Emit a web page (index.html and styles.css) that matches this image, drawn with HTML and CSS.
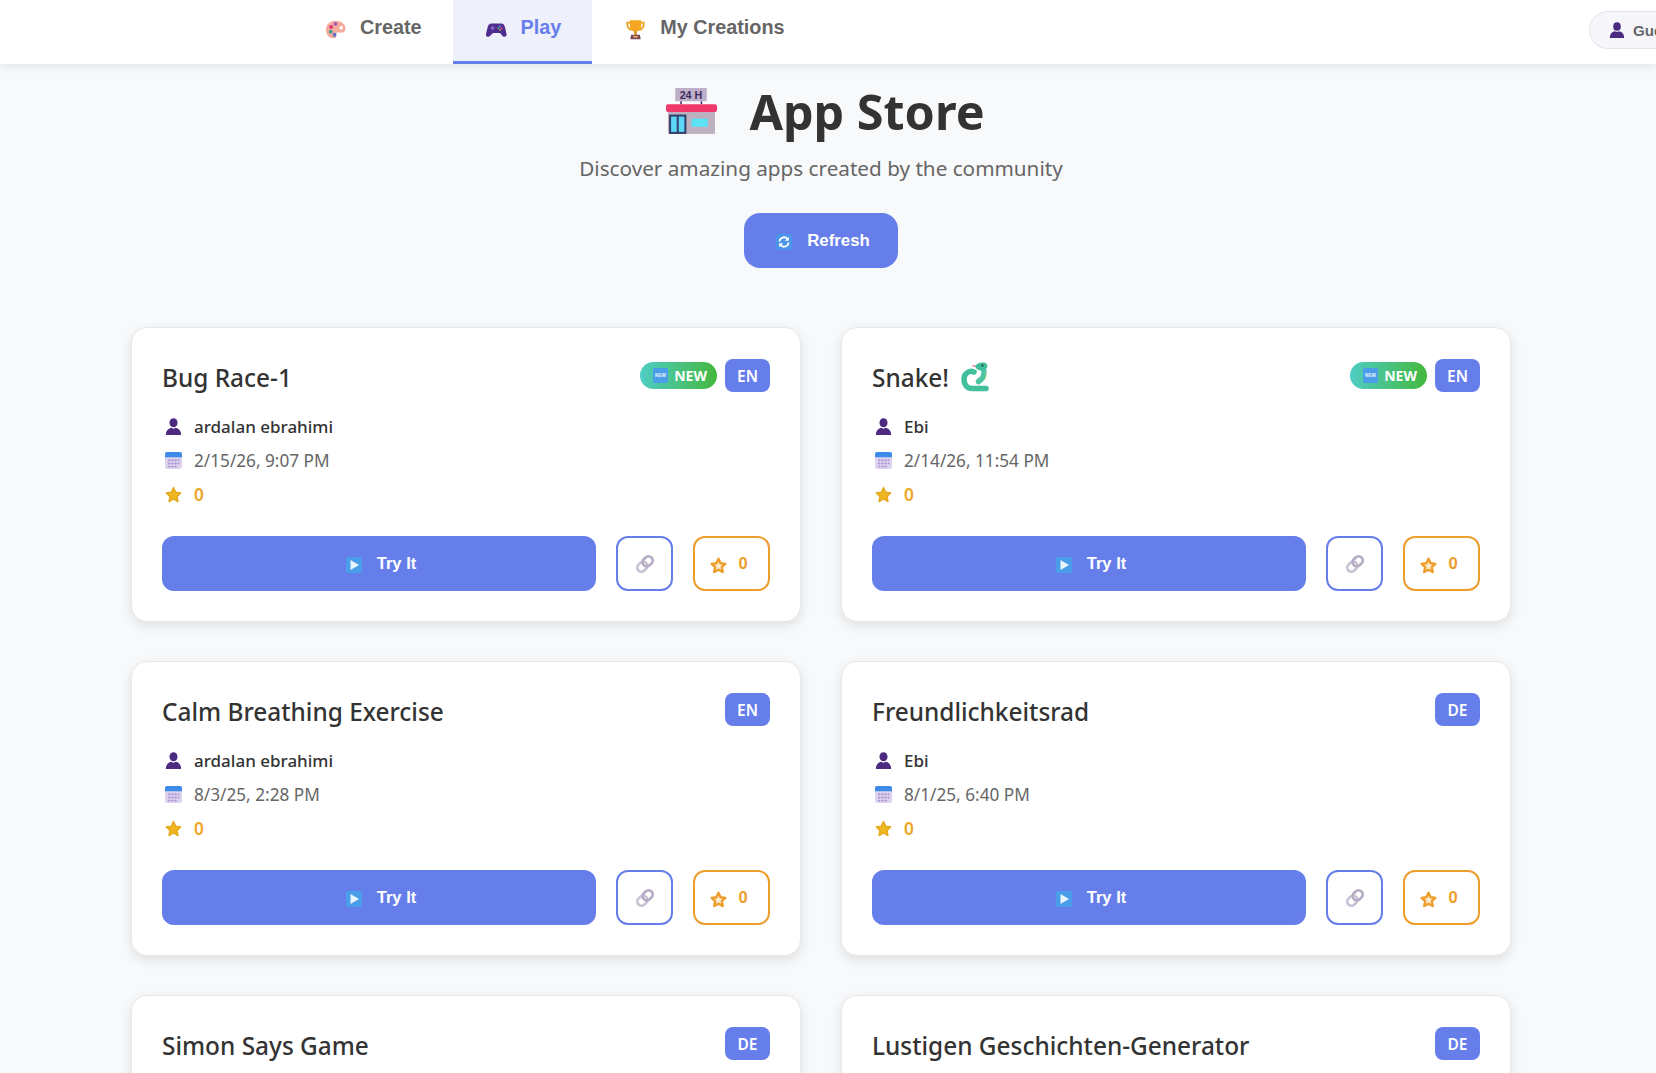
FILE: index.html
```html
<!DOCTYPE html>
<html lang="en">
  <head>
    <meta charset="UTF-8" />
    <meta name="viewport" content="width=device-width, initial-scale=1.0" />
    <title>App Store</title>
    <link rel="stylesheet" href="styles.css">
  </head>
  <body>
    <svg class="sprites" width="0" height="0">
      <symbol id="i-palette" viewBox="0 0 24 24">
        <path d="M12 2C5 2 1 7 1 12.500C1 18 5 22 10.500 22c2.500 0 2.500-2 2-3.500-.5-1.800.5-3 2.500-3h4c3 0 4.500-1.800 4.500-4.500C23.500 6 18.500 2 12 2z" fill="#f4ac9f"/>
        <circle cx="7" cy="9" r="2.200" fill="#d8356f"/>
        <circle cx="12" cy="5.500" r="2.200" fill="#a653b8"/>
        <circle cx="6.500" cy="14.500" r="2.200" fill="#3f9f90"/>
        <circle cx="11" cy="18" r="2.200" fill="#5f6fc8"/>
        <circle cx="18.500" cy="10" r="1.900" fill="#fff"/>
      </symbol>
      <symbol id="i-gamepad" viewBox="0 0 24 24">
        <path d="M6.500 5h11c2.500 0 3.500 1.500 4.200 4.500l1.800 8c.5 2.500-2.700 3.800-4.500 1.800L16 16H8l-3.500 3.300c-1.800 2-5 .7-4.500-1.800l1.800-8C2.500 6.500 4 5 6.500 5z" fill="#4f2d8f"/>
        <rect x="5" y="9.500" width="5" height="1.600" fill="#8e6cc9"/>
        <rect x="6.700" y="7.800" width="1.600" height="5" fill="#8e6cc9"/>
        <circle cx="16" cy="8.500" r="1" fill="#4fb8e8"/>
        <circle cx="18" cy="10.500" r="1" fill="#e84f8a"/>
        <circle cx="14" cy="10.500" r="1" fill="#58c26e"/>
        <circle cx="16" cy="12.500" r="1" fill="#e8b84f"/>
      </symbol>
      <symbol id="i-trophy" viewBox="0 0 24 24">
        <path d="M6 4H2.500c0 5 1.500 8 5 8.500M18 4h3.500c0 5-1.500 8-5 8.500" fill="none" stroke="#e8a020" stroke-width="2"/>
        <path d="M5.500 1.500h13V8c0 4-2.500 6.500-6.500 6.500S5.500 12 5.500 8z" fill="#f5a623"/>
        <rect x="10.500" y="14" width="3" height="4" fill="#d98a17"/>
        <path d="M7 18h10l1 5H6z" fill="#7d4a4f"/>
        <rect x="9.500" y="19.500" width="5" height="1.600" fill="#f0c070"/>
      </symbol>
      <symbol id="i-refresh" viewBox="0 0 16 16">
        <rect width="16" height="16" rx="1" fill="#4a94ea"/>
        <path d="M3.500 7.500A4.500 4.500 0 0 1 11.500 5M12.500 8.500A4.500 4.500 0 0 1 4.500 11" fill="none" stroke="#fff" stroke-width="1.800"/>
        <path d="M12.800 2.800v3.900H8.900zM3.200 13.200V9.300h3.900z" fill="#fff"/>
      </symbol>
      <symbol id="i-person" viewBox="0 0 16 16">
        <ellipse cx="8" cy="4.500" rx="3.800" ry="4.300" fill="#4b2a80"/>
        <path d="M.8 16c0-3.800 1.800-6 5-6.800L8 10l2.200-.8c3.200.8 5 3 5 6.800z" fill="#4b2a80"/>
      </symbol>
      <symbol id="i-calendar" viewBox="0 0 16 16">
        <rect x="0" y="0" width="16" height="16" rx="2" fill="#ddd3ee"/>
        <path d="M0 5V2a2 2 0 0 1 2-2h12a2 2 0 0 1 2 2v3z" fill="#3d8be8"/>
        <g fill="#a98fd0">
          <rect x="3" y="7" width="2" height="1.600"/><rect x="6" y="7" width="2" height="1.600"/><rect x="9" y="7" width="2" height="1.600"/><rect x="12" y="7" width="1.500" height="1.600"/>
          <rect x="3" y="10" width="2" height="1.600"/><rect x="6" y="10" width="2" height="1.600"/><rect x="9" y="10" width="2" height="1.600"/><rect x="12" y="10" width="1.500" height="1.600"/>
          <rect x="3" y="13" width="2" height="1.400"/><rect x="6" y="13" width="2" height="1.400"/><rect x="9" y="13" width="2" height="1.400"/>
        </g>
      </symbol>
      <symbol id="i-star" viewBox="0 0 24 24">
        <path d="M12 2l3 6.700 7.200 1-5.200 5 1.300 7.200L12 18.300l-6.300 3.600L7 14.700l-5.200-5 7.200-1z" fill="#efb622" stroke="#e3a91c" stroke-width="2" stroke-linejoin="round"/>
      </symbol>
      <symbol id="i-star-line" viewBox="0 0 24 24">
        <path d="M12 3.500l2.600 5.700 6.100.8-4.500 4.200 1.200 6.100L12 17.300l-5.400 3 1.200-6.100L3.300 10l6.100-.8z" fill="#fbe9cc" stroke="#ed9d2b" stroke-width="3" stroke-linejoin="round"/>
      </symbol>
      <symbol id="i-play" viewBox="0 0 16 16">
        <rect width="16" height="16" rx="1" fill="#4a9de8"/>
        <path d="M4.500 3l8.500 5-8.500 5z" fill="#e8f5fd"/>
      </symbol>
      <symbol id="i-link" viewBox="0 0 24 24">
        <g transform="rotate(-45 12 12)" fill="none" stroke-width="3.200">
          <rect x="1" y="7" width="13" height="10" rx="5" stroke="#c9c2d4"/>
          <rect x="10" y="7" width="13" height="10" rx="5" stroke="#b5abc4"/>
        </g>
      </symbol>
      <symbol id="i-snake" viewBox="0 0 28 30">
        <path d="M25 26.500H11C5.500 26.500 3 22 3 17c0-6 6-9 10-7" fill="none" stroke="#42bf9d" stroke-width="5.500" stroke-linecap="round"/>
        <path d="M21.500 5c2.500 5 2 11-4 14.500" fill="none" stroke="#4cc6a4" stroke-width="5.500" stroke-linecap="round"/>
        <path d="M14 4c2-3 6-4 9-3.500 3 .5 4 3 3 5-1 2-3 3-6 3-2 0-5-1-6-4.500z" fill="#3fbf9b"/>
        <circle cx="21.500" cy="3.500" r="1.100" fill="#234"/>
        <path d="M14.500 4.500l-3-1" stroke="#e84f6a" stroke-width="1.200"/>
        <path d="M25 11v1.500M24.500 15v1.500" stroke="#e6d64a" stroke-width="1.200"/>
      </symbol>
    </svg>

    <nav class="topbar">
      <a class="tab"><svg class="tab-icon"><use href="#i-palette"/></svg>Create</a>
      <a class="tab tab-active"><svg class="tab-icon"><use href="#i-gamepad"/></svg>Play</a>
      <a class="tab"><svg class="tab-icon"><use href="#i-trophy"/></svg>My Creations</a>
      <div class="user-pill"><svg class="user-icon"><use href="#i-person"/></svg>Guest</div>
    </nav>

    <main class="store">
      <header class="store-head">
        <h1 class="store-title">
          <svg class="store-icon" viewBox="0 0 50 46">
            <rect x="9" y="0" width="31" height="13" rx="1" fill="#bdb0c8"/>
            <text x="24.500" y="10.500" class="store-sign">24 H</text>
            <rect x="14" y="13" width="1.500" height="3" fill="#3d2a5e"/>
            <rect x="34" y="13" width="1.500" height="3" fill="#3d2a5e"/>
            <rect x="2" y="23" width="46" height="22" fill="#bdb0c0"/>
            <rect x="0" y="16" width="50" height="7.500" rx="2" fill="#f0386b"/>
            <rect x="3" y="26" width="17" height="19" fill="#33406e"/>
            <rect x="5" y="28" width="5.500" height="15" fill="#5cd6f5"/>
            <rect x="12.500" y="28" width="5.500" height="15" fill="#5cd6f5"/>
            <rect x="25" y="30" width="16" height="8" fill="#5ce1f5"/>
          </svg>
          App Store
        </h1>
        <p class="store-sub">Discover amazing apps created by the community</p>
        <button class="refresh"><svg class="btn-icon"><use href="#i-refresh"/></svg>Refresh</button>
      </header>

      <section class="grid">
        <article class="card">
          <div class="card-head">
            <h3 class="card-title">Bug Race-1</h3>
            <div class="badges"><span class="badge-new"><svg class="new-icon" viewBox="0 0 16 16"><rect width="16" height="16" rx="1" fill="#4a9de8"/><text x="8" y="10" class="new-sign">NEW</text></svg>NEW</span><span class="badge-lang">EN</span></div>
          </div>
          <div class="meta author"><svg class="meta-icon"><use href="#i-person"/></svg>ardalan ebrahimi</div>
          <div class="meta"><svg class="meta-icon"><use href="#i-calendar"/></svg>2/15/26, 9:07 PM</div>
          <div class="meta stars"><svg class="meta-icon"><use href="#i-star"/></svg>0</div>
          <div class="actions">
            <button class="try"><svg class="btn-icon"><use href="#i-play"/></svg>Try It</button>
            <button class="share"><svg class="share-icon"><use href="#i-link"/></svg></button>
            <button class="fav"><svg class="fav-icon"><use href="#i-star-line"/></svg>0</button>
          </div>
        </article>

        <article class="card">
          <div class="card-head">
            <h3 class="card-title">Snake! <svg class="snake-icon"><use href="#i-snake"/></svg></h3>
            <div class="badges"><span class="badge-new"><svg class="new-icon" viewBox="0 0 16 16"><rect width="16" height="16" rx="1" fill="#4a9de8"/><text x="8" y="10" class="new-sign">NEW</text></svg>NEW</span><span class="badge-lang">EN</span></div>
          </div>
          <div class="meta author"><svg class="meta-icon"><use href="#i-person"/></svg>Ebi</div>
          <div class="meta"><svg class="meta-icon"><use href="#i-calendar"/></svg>2/14/26, 11:54 PM</div>
          <div class="meta stars"><svg class="meta-icon"><use href="#i-star"/></svg>0</div>
          <div class="actions">
            <button class="try"><svg class="btn-icon"><use href="#i-play"/></svg>Try It</button>
            <button class="share"><svg class="share-icon"><use href="#i-link"/></svg></button>
            <button class="fav"><svg class="fav-icon"><use href="#i-star-line"/></svg>0</button>
          </div>
        </article>

        <article class="card">
          <div class="card-head">
            <h3 class="card-title">Calm Breathing Exercise</h3>
            <div class="badges"><span class="badge-lang">EN</span></div>
          </div>
          <div class="meta author"><svg class="meta-icon"><use href="#i-person"/></svg>ardalan ebrahimi</div>
          <div class="meta"><svg class="meta-icon"><use href="#i-calendar"/></svg>8/3/25, 2:28 PM</div>
          <div class="meta stars"><svg class="meta-icon"><use href="#i-star"/></svg>0</div>
          <div class="actions">
            <button class="try"><svg class="btn-icon"><use href="#i-play"/></svg>Try It</button>
            <button class="share"><svg class="share-icon"><use href="#i-link"/></svg></button>
            <button class="fav"><svg class="fav-icon"><use href="#i-star-line"/></svg>0</button>
          </div>
        </article>

        <article class="card">
          <div class="card-head">
            <h3 class="card-title">Freundlichkeitsrad</h3>
            <div class="badges"><span class="badge-lang">DE</span></div>
          </div>
          <div class="meta author"><svg class="meta-icon"><use href="#i-person"/></svg>Ebi</div>
          <div class="meta"><svg class="meta-icon"><use href="#i-calendar"/></svg>8/1/25, 6:40 PM</div>
          <div class="meta stars"><svg class="meta-icon"><use href="#i-star"/></svg>0</div>
          <div class="actions">
            <button class="try"><svg class="btn-icon"><use href="#i-play"/></svg>Try It</button>
            <button class="share"><svg class="share-icon"><use href="#i-link"/></svg></button>
            <button class="fav"><svg class="fav-icon"><use href="#i-star-line"/></svg>0</button>
          </div>
        </article>

        <article class="card">
          <div class="card-head">
            <h3 class="card-title">Simon Says Game</h3>
            <div class="badges"><span class="badge-lang">DE</span></div>
          </div>
        </article>

        <article class="card">
          <div class="card-head">
            <h3 class="card-title">Lustigen Geschichten-Generator</h3>
            <div class="badges"><span class="badge-lang">DE</span></div>
          </div>
        </article>
      </section>
    </main>
  </body>
</html>
```

FILE: styles.css
```css
html,
body {
  height: 100%;
  overflow: hidden;
}

body {
  margin: 0;
  background: #f8f9fa;
  color: #333;
  font-family: "Noto Sans", sans-serif;
}

.sprites {
  display: block;
  height: 0;
}

.store-sign {
  font-family: "Liberation Sans", sans-serif;
  font-size: 10.500px;
  font-weight: 700;
  fill: #3d2a5e;
  text-anchor: middle;
}

.new-sign {
  font-family: "Liberation Sans", sans-serif;
  font-size: 5px;
  font-weight: 700;
  fill: #e8f5fd;
  text-anchor: middle;
}

/* top bar */
.topbar {
  display: flex;
  height: 64px;
  padding-left: 292px;
  background: #fff;
  box-shadow: 0 2px 10px rgba(0, 0, 0, 0.1);
  position: relative;
  font-family: "Liberation Sans", sans-serif;
}

.tab {
  display: flex;
  align-items: center;
  gap: 14px;
  height: 55px;
  padding: 0 31px 6px 33px;
  border-bottom: 3px solid transparent;
  font-size: 19.800px;
  font-weight: 700;
  color: #666;
}

.tab-active {
  background: #eef0fb;
  border-bottom-color: #667eea;
  color: #667eea;
}

.tab-icon {
  width: 21px;
  height: 21px;
  margin-top: 4px;
}

.user-pill {
  display: flex;
  align-items: center;
  gap: 8px;
  flex-shrink: 0;
  height: 36px;
  margin: 11px -40px 0 auto;
  padding: 0 19px;
  border: 1px solid #e3e3e8;
  border-radius: 20px;
  background: #f6f6fb;
  font-size: 15.200px;
  font-weight: 700;
  color: #666;
}

.user-icon {
  width: 16px;
  height: 16px;
}

/* heading */
.store {
  width: 1642px;
  padding: 0 131px;
  box-sizing: border-box;
}

.store-head {
  display: flex;
  flex-direction: column;
  align-items: center;
}

.store-title {
  display: flex;
  align-items: center;
  gap: 32px;
  margin: 21px 0 0 9px;
  font-size: 48.500px;
  line-height: 52px;
  font-weight: 700;
  color: #333;
}

.store-icon {
  width: 51px;
  height: 47px;
}

.store-sub {
  margin: 17px 0 0;
  font-size: 20.700px;
  line-height: 28px;
  color: #666;
}

.refresh {
  display: flex;
  align-items: center;
  justify-content: center;
  gap: 15px;
  width: 154px;
  height: 55px;
  margin-top: 31px;
  padding-left: 10px;
  border: 0;
  border-radius: 16px;
  background: #667eea;
  color: #fff;
  font-family: "Liberation Sans", sans-serif;
  font-size: 16.800px;
  font-weight: 700;
}

.btn-icon {
  width: 16px;
  height: 16px;
  margin-top: 2px;
}

/* cards */
.grid {
  display: grid;
  grid-template-columns: 670px 670px;
  grid-auto-rows: 295px;
  gap: 39px 40px;
  margin-top: 59px;
}

.card {
  display: flex;
  flex-direction: column;
  padding: 30px;
  border: 1px solid #e6e8ea;
  border-radius: 16px;
  background: #fff;
  box-shadow: 0 4px 12px rgba(0, 0, 0, 0.1);
  box-sizing: border-box;
}

.card-head {
  display: flex;
  justify-content: space-between;
  align-items: flex-start;
  padding-top: 1px;
  margin-bottom: 14px;
}

.card-title {
  display: flex;
  align-items: center;
  gap: 12px;
  margin: 0;
  height: 36px;
  font-size: 24.400px;
  font-weight: 500;
  color: #333;
}

.snake-icon {
  width: 28px;
  height: 30px;
}

.badges {
  display: flex;
  align-items: center;
  gap: 8px;
  height: 33px;
}

.badge-new {
  display: flex;
  align-items: center;
  gap: 6px;
  height: 27px;
  padding: 0 10px 0 13px;
  border-radius: 14px;
  background: linear-gradient(90deg, #4ecdc4, #44b83e);
  color: #fff;
  font-size: 14px;
  font-weight: 700;
}

.new-icon {
  width: 15px;
  height: 15px;
}

.badge-lang {
  display: flex;
  align-items: center;
  justify-content: center;
  width: 45px;
  height: 33px;
  border-radius: 8px;
  background: #667eea;
  color: #fff;
  font-size: 15.500px;
  font-weight: 600;
}

.meta {
  display: flex;
  align-items: center;
  gap: 12px;
  height: 34px;
  padding-left: 3px;
  font-size: 17.200px;
  color: #666;
}

.meta-icon {
  width: 17px;
  height: 17px;
  flex-shrink: 0;
}

.author {
  font-size: 17px;
  color: #333;
  font-weight: 500;
}

.stars {
  color: #eda626;
  font-weight: 600;
}

.actions {
  display: flex;
  gap: 20px;
  height: 55px;
  margin-top: auto;
}

.actions button {
  display: flex;
  align-items: center;
  justify-content: center;
  font-family: "Liberation Sans", sans-serif;
  font-size: 16.500px;
  font-weight: 700;
  background: #fff;
  padding: 0;
}

.actions .try {
  flex: 1;
  gap: 15px;
  padding-left: 4px;
  border: 0;
  border-radius: 12px;
  background: #667eea;
  color: #fff;
}

.actions .share {
  width: 57px;
  border: 2px solid #667eea;
  border-radius: 12px;
}

.share-icon {
  width: 20px;
  height: 20px;
  margin-top: 1px;
}

.actions .fav {
  gap: 10px;
  width: 77px;
  padding-right: 4px;
  border: 2px solid #ed9d2b;
  border-radius: 12px;
  color: #ed9d2b;
}

.fav-icon {
  width: 19px;
  height: 19px;
  margin-top: 4px;
  margin-left: -2px;
}
```
